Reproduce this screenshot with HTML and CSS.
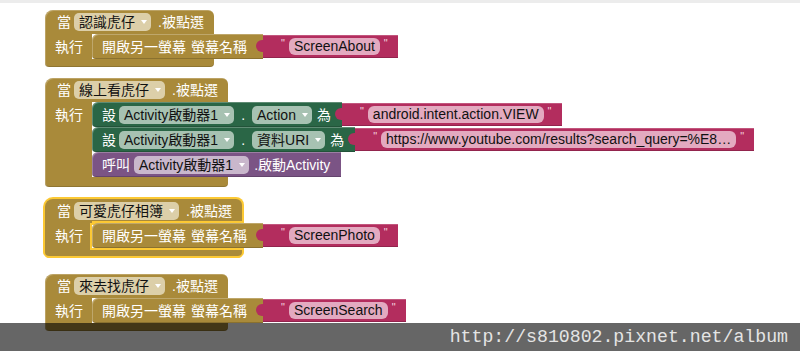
FILE: index.html
```html
<!DOCTYPE html>
<html lang="zh-Hant">
<head>
<meta charset="utf-8">
<title>Blocks</title>
<link rel="stylesheet" href="styles.css">
</head>
<body>
<main class="workspace">

  <section class="event ev1">
    <div class="ev-head"><span class="lbl">當</span><span class="dd dd-gold">認識虎仔<i class="arr"></i></span><span class="lbl suffix">.被點選</span></div>
    <div class="ev-body">
      <div class="ev-arm"><span class="lbl">執行</span></div>
      <div class="ev-stack">
        <div class="stmt">
          <div class="sb sb-gold"><span class="lbl">開啟另一螢幕</span><span class="lbl name">螢幕名稱</span></div>
          <div class="txt"><span class="q">"</span><span class="tp">ScreenAbout</span><span class="q">"</span></div>
        </div>
      </div>
    </div>
    <div class="ev-foot"></div>
  </section>

  <section class="event ev2">
    <div class="ev-head"><span class="lbl">當</span><span class="dd dd-gold">線上看虎仔<i class="arr"></i></span><span class="lbl suffix">.被點選</span></div>
    <div class="ev-body">
      <div class="ev-arm"><span class="lbl">執行</span></div>
      <div class="ev-stack">
        <div class="stmt">
          <div class="sb sb-green"><span class="lbl">設</span><span class="dd dd-green">Activity啟動器1<i class="arr"></i></span><span class="lbl dot">.</span><span class="dd dd-green">Action<i class="arr"></i></span><span class="lbl as">為</span></div>
          <div class="txt"><span class="q">"</span><span class="tp">android.intent.action.VIEW</span><span class="q">"</span></div>
        </div>
        <div class="stmt">
          <div class="sb sb-green"><span class="lbl">設</span><span class="dd dd-green">Activity啟動器1<i class="arr"></i></span><span class="lbl dot">.</span><span class="dd dd-green">資料URI<i class="arr"></i></span><span class="lbl as">為</span></div>
          <div class="txt"><span class="q">"</span><span class="tp">https://www.youtube.com/results?search_query=%E8…</span><span class="q">"</span></div>
        </div>
        <div class="stmt">
          <div class="sb sb-purple"><span class="lbl">呼叫</span><span class="dd dd-purple">Activity啟動器1<i class="arr"></i></span><span class="lbl call">.啟動Activity</span></div>
        </div>
      </div>
    </div>
    <div class="ev-foot"></div>
  </section>

  <section class="event ev3 selected">
    <div class="ev-head"><span class="lbl">當</span><span class="dd dd-gold">可愛虎仔相簿<i class="arr"></i></span><span class="lbl suffix">.被點選</span></div>
    <div class="ev-body">
      <div class="ev-arm"><span class="lbl">執行</span></div>
      <div class="ev-stack">
        <div class="stmt">
          <div class="sb sb-gold"><span class="lbl">開啟另一螢幕</span><span class="lbl name">螢幕名稱</span></div>
          <div class="txt"><span class="q">"</span><span class="tp">ScreenPhoto</span><span class="q">"</span></div>
        </div>
      </div>
    </div>
    <div class="ev-foot"></div>
  </section>

  <section class="event ev4">
    <div class="ev-head"><span class="lbl">當</span><span class="dd dd-gold">來去找虎仔<i class="arr"></i></span><span class="lbl suffix">.被點選</span></div>
    <div class="ev-body">
      <div class="ev-arm"><span class="lbl">執行</span></div>
      <div class="ev-stack">
        <div class="stmt">
          <div class="sb sb-gold"><span class="lbl">開啟另一螢幕</span><span class="lbl name">螢幕名稱</span></div>
          <div class="txt"><span class="q">"</span><span class="tp">ScreenSearch</span><span class="q">"</span></div>
        </div>
      </div>
    </div>
    <div class="ev-foot"></div>
  </section>

</main>
<div class="watermark">http://s810802.pixnet.net/album</div>
</body>
</html>
```

FILE: styles.css
```css
:root {
  --gold: #a98a3a;
  --green: #2a6646;
  --purple: #7b5485;
  --pink: #b32d5e;
  --sel: #fcc934;
}

* { box-sizing: border-box; }

html, body {
  margin: 0;
  padding: 0;
  background: #fff;
}

body {
  position: relative;
  width: 800px;
  height: 351px;
  overflow: hidden;
  border-top: 3px solid #ececec;
  font-family: "Liberation Sans", "Noto Sans CJK TC", sans-serif;
  font-size: 14px;
  line-height: 18px;
  color: #fff;
}

.workspace {
  display: flex;
  flex-direction: column;
  align-items: flex-start;
  padding: 7px 0 0 45px;
}

.event {
  display: flex;
  flex-direction: column;
}

.ev2 { margin-top: 11px; }
.ev3 { margin-top: 12px; }
.ev4 { margin-top: 18px; }

.lbl {
  white-space: nowrap;
  color: #fff;
}

.ev-head {
  display: flex;
  align-items: center;
  gap: 3px;
  height: 24px;
  padding: 0 10px 0 12px;
  background: var(--gold);
  border-radius: 8px 6px 0 0;
  box-shadow: inset 1px 1px 0 rgba(255, 255, 255, 0.22);
}

.ev-head .suffix { margin-left: 4px; }

.ev-body {
  display: flex;
  width: 0;
  min-width: 100%;
}

.ev-arm {
  flex: none;
  width: 47px;
  padding: 4px 0 0 10px;
  background: var(--gold);
  box-shadow: inset 1px 0 0 rgba(255, 255, 255, 0.22);
}

.ev-stack {
  flex: none;
  display: flex;
  flex-direction: column;
  align-items: flex-start;
}

.ev-foot {
  height: 8px;
  background: var(--gold);
  border-radius: 0 0 4px 4px;
  box-shadow: inset 1px 0 0 rgba(255, 255, 255, 0.22), inset 0 -1px 0 rgba(0, 0, 0, 0.15);
}

.ev2 .ev-foot { height: 10px; }

/* dropdown fields */
.dd {
  display: flex;
  align-items: center;
  height: 18px;
  padding: 0 4px 0 5px;
  border-radius: 5px;
  color: #111;
  white-space: nowrap;
}
.dd-gold { background: #dccfa9; }
.dd-green { background: #a7c2b2; }
.dd-purple { background: #c9b7cc; }

.arr {
  display: inline-block;
  margin-left: 6px;
  width: 0;
  height: 0;
  border-left: 3px solid transparent;
  border-right: 3px solid transparent;
  border-top: 4px solid #fff;
}

/* statement rows */
.stmt {
  display: flex;
  align-items: center;
  height: 25px;
}

.sb {
  display: flex;
  align-items: center;
  gap: 3px;
  height: 25px;
  padding: 0 11px 0 10px;
  border-radius: 6px 0 0 4px;
  box-shadow: inset 1px 1px 0 rgba(255, 255, 255, 0.25), inset 0 -1px 0 rgba(0, 0, 0, 0.18);
}
.sb-gold { background: var(--gold); padding-right: 16px; }
.sb-green { background: var(--green); }
.sb-purple { background: var(--purple); }

.sb-gold .name { margin-left: 2px; }
.sb .dot { margin: 0 4px; }
.sb .as { margin-left: 2px; }
.sb-purple .dd { margin-left: 1px; }
.sb .call { margin-left: 2px; }

/* text value blocks */
.txt {
  position: relative;
  display: flex;
  align-items: center;
  gap: 4px;
  height: 23px;
  padding: 0 10px 0 18px;
  background: var(--pink);
  box-shadow: inset 0 1px 0 rgba(255, 255, 255, 0.2), inset 0 -1px 0 rgba(0, 0, 0, 0.18);
}

.txt::before {
  content: "";
  position: absolute;
  left: -7px;
  top: 5px;
  width: 8px;
  height: 12px;
  background: var(--pink);
  border-radius: 6px 0 0 6px;
}

.q {
  align-self: flex-start;
  margin-top: 3px;
  font-size: 11px;
  line-height: 11px;
  color: #f4d2df;
}

.tp {
  height: 17px;
  line-height: 17px;
  padding: 0 5px;
  border-radius: 6px;
  background: #e3aac0;
  color: #111;
  white-space: nowrap;
}

/* selected block outline */
.selected .ev-head {
  box-shadow: 0 0 0 2px var(--sel);
  background:
    linear-gradient(to right, transparent 47px, var(--sel) 47px) left bottom / 100% 2px no-repeat,
    var(--gold);
}
.selected .ev-arm {
  box-shadow: -2px 0 0 var(--sel), inset -2px 0 0 var(--sel);
}
.selected .ev-foot {
  box-shadow: 2px 0 0 var(--sel), -2px 0 0 var(--sel), 0 2px 0 var(--sel), 0 1px 0 1px var(--sel);
  background:
    linear-gradient(to right, transparent 45px, var(--sel) 45px) left top / 100% 2px no-repeat,
    var(--gold);
}

/* watermark overlay */
.watermark {
  position: absolute;
  left: 0;
  right: 0;
  bottom: 0;
  height: 28px;
  padding-right: 12px;
  background: rgba(0, 0, 0, 0.6);
  color: #e4e4e4;
  font-family: "Liberation Mono", monospace;
  font-size: 18.2px;
  line-height: 28px;
  text-align: right;
  white-space: nowrap;
}
```
